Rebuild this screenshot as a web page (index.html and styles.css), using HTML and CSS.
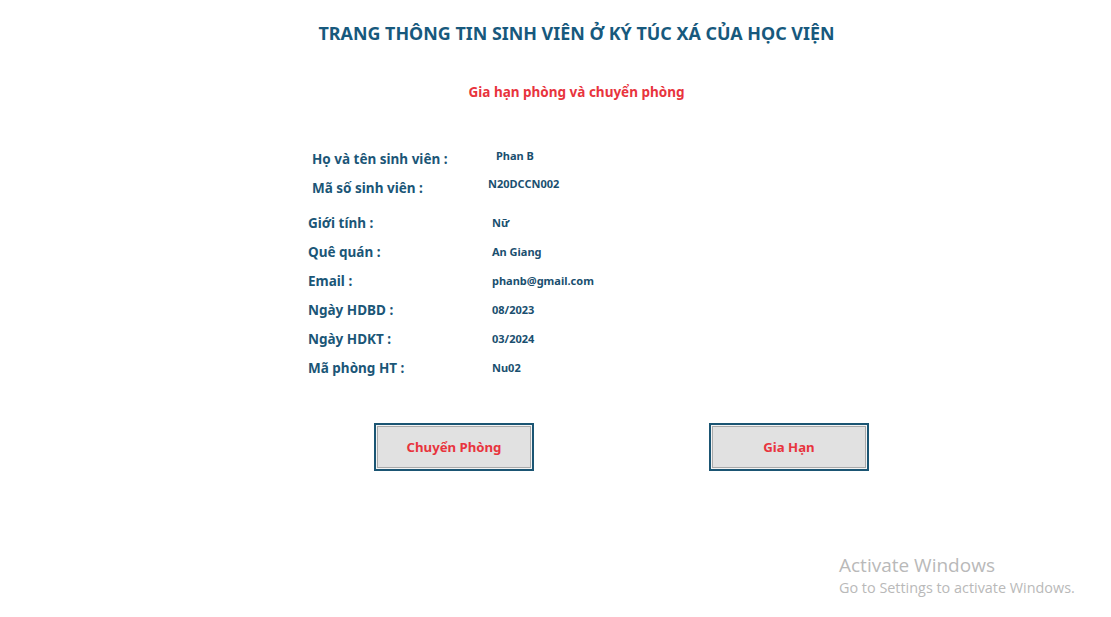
FILE: index.html
```html
<!DOCTYPE html>
<html lang="vi">
<head>
<meta charset="utf-8">
<title>Trang thông tin sinh viên</title>
<link rel="stylesheet" href="styles.css">
</head>
<body>
<div class="page">
  <header class="head">
    <h1 class="title">TRANG THÔNG TIN SINH VIÊN Ở KÝ TÚC XÁ CỦA HỌC VIỆN</h1>
    <h2 class="subtitle">Gia hạn phòng và chuyển phòng</h2>
  </header>

  <section class="info">
    <div class="row row-a">
      <span class="label">Họ và tên sinh viên :</span>
      <span class="value">Phan B</span>
    </div>
    <div class="row row-b">
      <span class="label">Mã số sinh viên :</span>
      <span class="value">N20DCCN002</span>
    </div>
    <div class="rows">
      <div class="row row-c"><span class="label">Giới tính :</span><span class="value">Nữ</span></div>
      <div class="row row-c"><span class="label">Quê quán :</span><span class="value">An Giang</span></div>
      <div class="row row-c"><span class="label">Email :</span><span class="value">phanb@gmail.com</span></div>
      <div class="row row-c"><span class="label">Ngày HDBD :</span><span class="value">08/2023</span></div>
      <div class="row row-c"><span class="label">Ngày HDKT :</span><span class="value">03/2024</span></div>
      <div class="row row-c"><span class="label">Mã phòng HT :</span><span class="value">Nu02</span></div>
    </div>
  </section>

  <div class="actions">
    <button class="btn">Chuyển Phòng</button>
    <button class="btn">Gia Hạn</button>
  </div>

  <div class="watermark">
    <div class="wm-title">Activate Windows</div>
    <div class="wm-sub">Go to Settings to activate Windows.</div>
  </div>
</div>
</body>
</html>
```

FILE: styles.css
```css
html, body {
  margin: 0;
  padding: 0;
  background: #ffffff;
}
body {
  font-family: "Noto Sans", "Open Sans", sans-serif;
  font-weight: 700;
  color: #1b5677;
}
.page {
  position: relative;
  width: 1111px;
  height: 617px;
  overflow: hidden;
}
.head {
  padding-left: 42px;
  padding-top: 21px;
  text-align: center;
}
.title {
  margin: 0;
  font-size: 17.9px;
  line-height: 24px;
  font-weight: 700;
  color: #17597d;
  letter-spacing: 0;
}
.subtitle {
  margin: 37px 0 0;
  font-size: 13.5px;
  line-height: 20px;
  font-weight: 700;
  color: #e8343d;
}
.info {
  padding-top: 44px;
}
.row {
  display: flex;
  align-items: flex-start;
}
.label {
  font-size: 13.5px;
  line-height: 20px;
}
.value {
  font-size: 11px;
  line-height: 20px;
  color: #1a4f6f;
}
.row-a {
  height: 28px;
  padding-left: 312px;
}
.row-a .label { width: 184px; padding-top: 3px; }
.row-b {
  height: 24px;
  padding-left: 312px;
}
.row-b .label { width: 176px; padding-top: 4px; }
.rows {
  padding-top: 15px;
}
.row-c {
  height: 29px;
  padding-left: 308px;
}
.row-c .label { width: 184px; }
.actions {
  display: flex;
  gap: 175px;
  padding-left: 374px;
  padding-top: 36px;
}
.btn {
  width: 160px;
  height: 48px;
  box-sizing: border-box;
  border: 2px solid #1b5573;
  background: #e1e1e1;
  box-shadow: inset 0 0 0 1px #f4f4f4, inset 0 0 0 2px #a9a9a9;
  font-family: "Noto Sans", "Open Sans", sans-serif;
  font-weight: 700;
  font-size: 13.2px;
  color: #e8343d;
  padding: 0;
  cursor: pointer;
}
.watermark {
  position: absolute;
  left: 839px;
  top: 553px;
  font-weight: 400;
  color: #b9b9b9;
  font-family: "Open Sans", "Noto Sans", sans-serif;
}
.wm-title {
  font-size: 19px;
  line-height: 24px;
}
.wm-sub {
  font-size: 14.4px;
  line-height: 22px;
}
```
